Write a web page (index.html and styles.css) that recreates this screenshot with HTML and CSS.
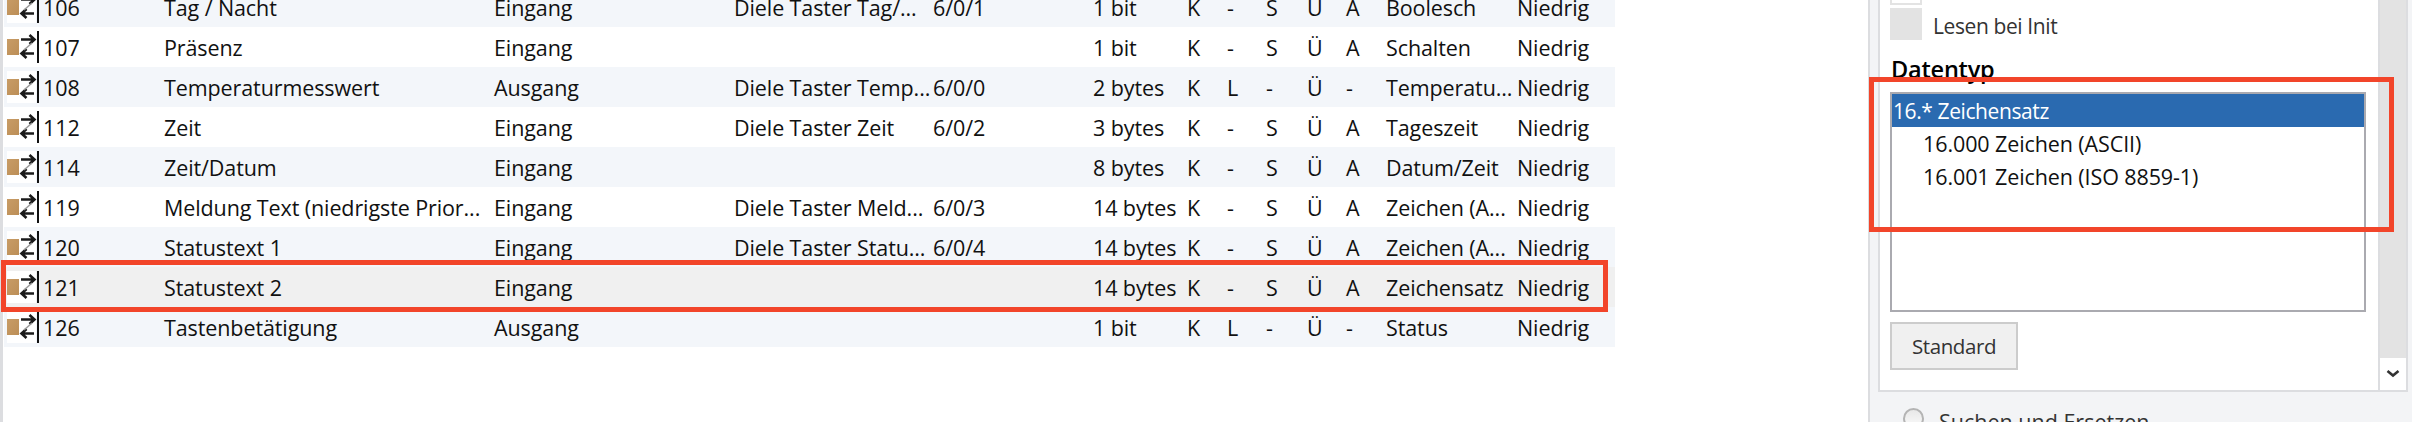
FILE: index.html
```html
<!DOCTYPE html>
<html lang="de">
<head>
  <meta charset="UTF-8">
  <title>Gruppenobjekte</title>
  <link rel="stylesheet" href="styles.css">
</head>
<body>
  <svg class="defs" width="0" height="0">
    <symbol id="obj-icon" viewBox="0 0 33 32">
      <defs>
        <linearGradient id="brown" x1="0" y1="0" x2="1" y2="1">
          <stop offset="0" stop-color="#c89c66"/>
          <stop offset="1" stop-color="#bc8e57"/>
        </linearGradient>
      </defs>
      <rect width="29" height="32" fill="#fff"/>
      <rect y="8" width="12" height="16" fill="url(#brown)"/>
      <path d="M14 8.500h13M22.500 4 27.500 8.500 22.500 13M27 22.500H15M19.500 18 14.500 22.500 19.500 27" fill="none" stroke="#1a1a1a" stroke-width="2.600"/>
      <path d="M25 12 17 19" fill="none" stroke="#999" stroke-width="1.500"/>
      <rect x="30" width="2" height="32" fill="#111"/>
    </symbol>
  </svg>

  <div class="page">
    <div class="gutter"></div>

    <main class="objects">
      <div class="row alt">
        <svg class="icon"><use href="#obj-icon"/></svg><span>106</span><span>Tag / Nacht</span><span>Eingang</span><span>Diele Taster Tag/...</span><span>6/0/1</span><span>1 bit</span><span>K</span><span>-</span><span>S</span><span>Ü</span><span>A</span><span>Boolesch</span><span>Niedrig</span>
      </div>
      <div class="row">
        <svg class="icon"><use href="#obj-icon"/></svg><span>107</span><span>Präsenz</span><span>Eingang</span><span></span><span></span><span>1 bit</span><span>K</span><span>-</span><span>S</span><span>Ü</span><span>A</span><span>Schalten</span><span>Niedrig</span>
      </div>
      <div class="row alt">
        <svg class="icon"><use href="#obj-icon"/></svg><span>108</span><span>Temperaturmesswert</span><span>Ausgang</span><span>Diele Taster Temp...</span><span>6/0/0</span><span>2 bytes</span><span>K</span><span>L</span><span>-</span><span>Ü</span><span>-</span><span>Temperatu...</span><span>Niedrig</span>
      </div>
      <div class="row">
        <svg class="icon"><use href="#obj-icon"/></svg><span>112</span><span>Zeit</span><span>Eingang</span><span>Diele Taster Zeit</span><span>6/0/2</span><span>3 bytes</span><span>K</span><span>-</span><span>S</span><span>Ü</span><span>A</span><span>Tageszeit</span><span>Niedrig</span>
      </div>
      <div class="row alt">
        <svg class="icon"><use href="#obj-icon"/></svg><span>114</span><span>Zeit/Datum</span><span>Eingang</span><span></span><span></span><span>8 bytes</span><span>K</span><span>-</span><span>S</span><span>Ü</span><span>A</span><span>Datum/Zeit</span><span>Niedrig</span>
      </div>
      <div class="row">
        <svg class="icon"><use href="#obj-icon"/></svg><span>119</span><span>Meldung Text (niedrigste Prior...</span><span>Eingang</span><span>Diele Taster Meld...</span><span>6/0/3</span><span>14 bytes</span><span>K</span><span>-</span><span>S</span><span>Ü</span><span>A</span><span>Zeichen (A...</span><span>Niedrig</span>
      </div>
      <div class="row alt">
        <svg class="icon"><use href="#obj-icon"/></svg><span>120</span><span>Statustext 1</span><span>Eingang</span><span>Diele Taster Statu...</span><span>6/0/4</span><span>14 bytes</span><span>K</span><span>-</span><span>S</span><span>Ü</span><span>A</span><span>Zeichen (A...</span><span>Niedrig</span>
      </div>
      <div class="row selected">
        <svg class="icon"><use href="#obj-icon"/></svg><span>121</span><span>Statustext 2</span><span>Eingang</span><span></span><span></span><span>14 bytes</span><span>K</span><span>-</span><span>S</span><span>Ü</span><span>A</span><span>Zeichensatz</span><span>Niedrig</span>
      </div>
      <div class="row alt">
        <svg class="icon"><use href="#obj-icon"/></svg><span>126</span><span>Tastenbetätigung</span><span>Ausgang</span><span></span><span></span><span>1 bit</span><span>K</span><span>L</span><span>-</span><span>Ü</span><span>-</span><span>Status</span><span>Niedrig</span>
      </div>
    </main>

    <aside class="side">
      <div class="props">
        <div class="props-content">
          <div class="check check-cut"></div>
          <div class="check-row">
            <div class="check"></div>
            <span class="check-label">Lesen bei Init</span>
          </div>
          <h2>Datentyp</h2>
          <div class="listbox">
            <div class="item active">16.* Zeichensatz</div>
            <div class="item sub">16.000 Zeichen (ASCII)</div>
            <div class="item sub">16.001 Zeichen (ISO 8859-1)</div>
          </div>
          <button class="std-btn">Standard</button>
        </div>
        <div class="scrollbar">
          <div class="track"></div>
          <div class="scroll-down">
            <svg width="14" height="10" viewBox="0 0 14 10"><path d="M1.500 2 7 6.500 12.500 2" fill="none" stroke="#333" stroke-width="2.600"/></svg>
          </div>
        </div>
      </div>
      <div class="search-row">
        <div class="radio"></div>
        <span>Suchen und Ersetzen</span>
      </div>
    </aside>
  </div>

  <!-- annotations drawn on top of the screenshot -->
  <div class="mark mark-row"></div>
  <div class="mark mark-type"></div>
</body>
</html>
```

FILE: styles.css
```css
html, body {
  margin: 0;
  height: 422px;
  overflow: hidden;
  background: white;
}
body {
  font-family: "Open Sans", sans-serif;
  font-size: 21.500px;
  color: #111;
  position: relative;
}
.defs {
  position: absolute;
}
.page {
  display: flex;
  height: 422px;
}
.gutter {
  width: 3px;
  background-color: #dcdde0;
  flex-shrink: 0;
}
.objects {
  width: 1611px;
  margin-left: 1px;
  margin-top: -13px;
  flex-shrink: 0;
}
.row {
  display: grid;
  grid-template-columns: 36px 121px 330px 240px 199px 160px 94px 40px 39px 41px 39px 40px 131px 98px;
  height: 40px;
  line-height: 41px;
  padding-left: 3px;
  white-space: nowrap;
  letter-spacing: -0.1px;
}
.row.alt {
  background-color: #f3f6fa;
}
.row.selected {
  background-color: #f0f0f0;
}
.icon {
  width: 33px;
  height: 32px;
  margin-top: 4px;
}
.side {
  margin-left: 253px;
  flex: 1;
  border-left: 2px solid #dcdde0;
  background-color: #f3f4f6;
  padding-left: 8px;
  min-width: 0;
}
.props {
  display: flex;
  width: 526px;
  height: 390px;
  border-left: 2px solid #dcdde0;
  border-right: 2px solid #dcdde0;
  border-bottom: 2px solid #dcdde0;
  background: white;
}
.props-content {
  flex: 1;
  padding-left: 10px;
}
.check {
  width: 32px;
  height: 32px;
  background-color: #e3e3e3;
  flex-shrink: 0;
}
.check-cut {
  box-sizing: border-box;
  margin-top: -27px;
  margin-bottom: 3px;
  background: white;
  border: 2px solid #e3e3e3;
}
.check-row {
  display: flex;
  align-items: center;
  gap: 11px;
  color: #333;
  font-size: 21px;
  letter-spacing: -0.4px;
}
.check-label {
  padding-top: 3px;
}
h2 {
  margin: 10px 0 4px 1px;
  font-size: 23.500px;
  font-weight: 600;
  line-height: 38px;
  height: 38px;
  color: #000;
  letter-spacing: -0.2px;
}
.listbox {
  box-sizing: border-box;
  width: 476px;
  height: 220px;
  border: 2px solid #aaaab0;
  background: white;
}
.item {
  height: 33px;
  line-height: 34px;
  padding-left: 1px;
  white-space: nowrap;
  letter-spacing: -0.1px;
}
.item.active {
  background-color: #2a6ab0;
  color: white;
  font-size: 21px;
  letter-spacing: -0.4px;
}
.item.sub {
  padding-left: 31px;
}
.std-btn {
  display: block;
  box-sizing: border-box;
  width: 128px;
  height: 48px;
  margin-top: 10px;
  padding: 0;
  background-color: #f0f0f0;
  border: 2px solid #cccccc;
  font-family: inherit;
  font-size: 20.500px;
  color: #333;
  letter-spacing: -0.4px;
}
.scrollbar {
  width: 26px;
  border-left: 2px solid #dcdde0;
  display: flex;
  flex-direction: column;
}
.track {
  flex: 1;
  background-color: #e3e3e3;
}
.scroll-down {
  height: 32px;
  display: flex;
  align-items: center;
  justify-content: center;
}
.search-row {
  display: flex;
  align-items: flex-start;
  gap: 15px;
  margin: 16px 0 0 25px;
  font-size: 21.500px;
  line-height: 28px;
  color: #333;
  white-space: nowrap;
}
.radio {
  box-sizing: border-box;
  width: 21px;
  height: 21px;
  border: 2px solid #b4b4b4;
  border-radius: 50%;
  background: linear-gradient(#e8e8e8, #fafafa);
  flex-shrink: 0;
}
.mark {
  position: absolute;
  box-sizing: border-box;
  border: 5px solid #f2452a;
}
.mark-row {
  left: 1px;
  top: 260px;
  width: 1607px;
  height: 52px;
}
.mark-type {
  left: 1869px;
  top: 77px;
  width: 525px;
  height: 155px;
}
```
